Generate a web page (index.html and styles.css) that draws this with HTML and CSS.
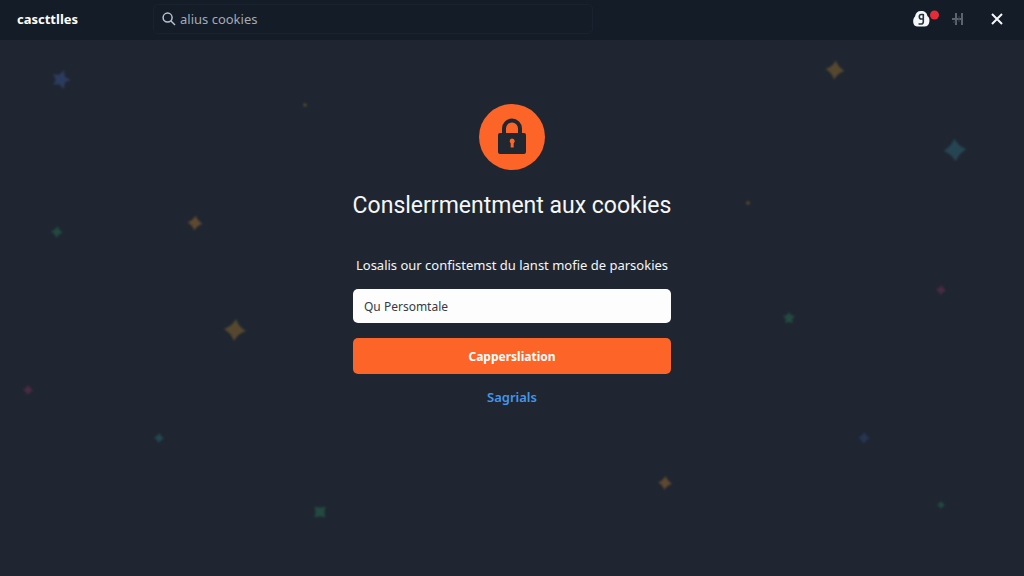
FILE: index.html
```
<!DOCTYPE html>
<html lang="fr">
<head>
    <meta charset="UTF-8">
    <meta name="viewport" content="width=device-width, initial-scale=1.0">
    <title>cascttlles - Cookies</title>
    <link rel="stylesheet" href="styles.css">
</head>
<body>

    <header class="topbar">
        <a class="brand" href="#">cascttlles</a>

        <label class="search">
            <svg class="search-icon" viewBox="0 0 14 14" aria-hidden="true">
                <circle cx="5.6" cy="5.6" r="4.5"/>
                <path d="M9 9l4 4"/>
            </svg>
            <input type="text" aria-label="Recherche" value="alius cookies">
        </label>

        <nav class="actions">
            <button class="account" type="button" aria-label="Compte">
                <svg viewBox="0 0 26 20" aria-hidden="true">
                    <path class="account-shape" d="M8 2c4 0 6 2 6.400 5 1.700 1 2.300 3 2 5.500-.4 3.500-2 5-5 5H5c-3 0-4.600-1.500-4.800-4.500C0 10.500.8 8.500 2 7.500 2.500 4 4.500 2 8 2z"/>
                    <path class="account-mark" d="M10.300 5v7.700c0 1.600-1 2.300-2.300 2.300H5.500M10.300 5.500H8.300C6.800 5.500 6.300 6.300 6.300 7.700s.6 2.300 2 2.300h2"/>
                    <circle class="account-dot" cx="21.500" cy="6" r="4.500"/>
                </svg>
            </button>
            <button class="tools" type="button" aria-label="Options">
                <svg viewBox="0 0 14 14" aria-hidden="true">
                    <path d="M5 1v12M1 7h10M11 1v12"/>
                    <path class="tools-thin" d="M2 10h3M8 4v6"/>
                </svg>
            </button>
            <button class="close" type="button" aria-label="Fermer">
                <svg viewBox="0 0 12 12" aria-hidden="true">
                    <path d="M1 1l10 10M11 1L1 11"/>
                </svg>
            </button>
        </nav>
    </header>

    <main class="page">
        <!-- Étoiles du fond -->
        <svg class="stars" viewBox="0 0 1024 536" preserveAspectRatio="xMidYMid slice" aria-hidden="true">
            <defs>
                <path id="star" d="M1-10Q3-3 10 1Q3 3-1 10Q-3 3-10-1Q-3-3 1-10z"/>
            </defs>
            <path class="blue" d="M64 30l1 7 6 3-6 2-1 7-5-5-6 1 3-5-3-6 6 1z"/>
            <use class="gold" href="#star" transform="translate(835 30) scale(.95)"/>
            <use class="cyan" href="#star" transform="translate(955 110) rotate(-9) scale(1.150)"/>
            <use class="amber" href="#star" transform="translate(195 183) scale(.75)"/>
            <use class="gold" href="#star" transform="translate(235 290) scale(1.100)"/>
            <use class="amber" href="#star" transform="translate(665 443) scale(.7)"/>
            <use class="green" href="#star" transform="translate(57 192) scale(.6)"/>
            <path class="green" d="M789 272l2 3 4 1-3 3 1 4-4-1-4 1 1-4-3-3 4-1z"/>
            <use class="green" href="#star" transform="translate(320 472) rotate(40) scale(.8)"/>
            <use class="teal" href="#star" transform="translate(159 398) scale(.5)"/>
            <use class="blue faint" href="#star" transform="translate(864 398) scale(.6)"/>
            <use class="pink" href="#star" transform="translate(28 350) scale(.5)"/>
            <use class="pink" href="#star" transform="translate(941 250) scale(.5)"/>
            <use class="green" href="#star" transform="translate(941 465) scale(.4)"/>
            <circle class="gold" cx="305" cy="65" r="1.800"/>
            <circle class="amber" cx="748" cy="163" r="1.800"/>
        </svg>

        <!-- Formulaire de consentement -->
        <form class="consent">
            <svg class="lock" viewBox="0 0 66 66" aria-hidden="true">
                <circle class="lock-circle" cx="33" cy="33" r="33"/>
                <path class="lock-arch" d="M25 31v-6.500a8 8 0 0 1 16 0V31"/>
                <rect class="lock-body" x="19" y="29" width="28" height="21" rx="2"/>
                <path class="lock-circle" d="M33 34.500a2.700 2.700 0 0 1 1.700 4.800v4.200h-3v-4.200A2.700 2.700 0 0 1 33 34.500z"/>
            </svg>
            <h1>Conslerrmentment aux cookies</h1>
            <label class="intro" for="personal">Losalis our confistemst du lanst mofie de parsokies</label>
            <input class="field" type="text" id="personal" value="Qu Persomtale">
            <button class="submit" type="button">Cappersliation</button>
            <a class="more" href="#">Sagrials</a>
        </form>
    </main>

</body>
</html>
```
FILE: styles.css
```
* {
    box-sizing: border-box;
}

body {
    display: flex;
    flex-direction: column;
    min-height: 100vh;
    margin: 0;
    font-family: "Noto Sans", sans-serif;
    color: #f4f6f8;
    background-color: #1f2631;
}

input, button {
    font-family: inherit;
    border: none;
}

button {
    cursor: pointer;
}

a {
    text-decoration: none;
}

.topbar {
    display: flex;
    align-items: center;
    height: 40px;
    padding: 0 21px 2px 17px;
    background-color: #141c27;
}

.brand {
    width: 136px;
    font-size: 13px;
    font-weight: 700;
    color: #fff;
}

.search {
    display: flex;
    align-items: center;
    gap: 4px;
    width: 43vw;
    height: 30px;
    padding: 0 8px;
    border: 1px solid #19222e;
    border-radius: 5px;
}

.search-icon {
    width: 14px;
    height: 14px;
    fill: none;
    stroke: #b9c1d2;
    stroke-width: 1.5;
}

.search input {
    flex: 1;
    padding: 0;
    font-size: 13px;
    color: #a3abb9;
    background: none;
}

.actions {
    display: flex;
    align-items: center;
    gap: 12px;
    margin-left: auto;
}

.actions button {
    display: flex;
    padding: 0;
    background: none;
}

.account svg {
    width: 26px;
    height: 20px;
}

.account-shape {
    fill: #f5f7f9;
}

.account-mark {
    fill: none;
    stroke: #26303c;
    stroke-width: 1.6;
}

.account-dot {
    fill: #e52b38;
}

.tools svg {
    width: 14px;
    height: 14px;
    fill: none;
    stroke: #5b6370;
    stroke-width: 2;
}

.tools .tools-thin {
    stroke: #3a424f;
    stroke-width: 1;
}

.actions .close {
    padding-left: 14px;
}

.close svg {
    width: 12px;
    height: 12px;
    fill: none;
    stroke: #f5f7f9;
    stroke-width: 2;
}

.page {
    position: relative;
    flex: 1;
    padding: 64px 20px;
}

.stars {
    position: absolute;
    top: 0;
    left: 0;
    width: 100%;
    height: 100%;
    opacity: 0.75;
    filter: blur(1px);
}

.blue {
    fill: #30436d;
}

.gold {
    fill: #69542f;
}

.amber {
    fill: #765430;
}

.cyan {
    fill: #29505f;
}

.green {
    fill: #245645;
}

.teal {
    fill: #24535a;
}

.pink {
    fill: #5a2d49;
}

.faint {
    opacity: 0.7;
}

.consent {
    position: relative;
    display: flex;
    flex-direction: column;
    align-items: center;
    max-width: 318px;
    margin: 0 auto;
}

.lock {
    width: 66px;
    height: 66px;
}

.lock-circle {
    fill: #fc6527;
}

.lock-arch {
    fill: none;
    stroke: #202731;
    stroke-width: 4;
}

.lock-body {
    fill: #202731;
}

.consent h1 {
    margin: 20px 0 33px;
    font-family: Roboto, "Noto Sans", sans-serif;
    font-size: 23px;
    font-weight: 400;
    line-height: 32px;
    white-space: nowrap;
}

.intro {
    margin-bottom: 14px;
    font-size: 13px;
    line-height: 20px;
    white-space: nowrap;
}

.field {
    width: 100%;
    height: 34px;
    padding: 0 11px;
    font-size: 12px;
    color: #353b45;
    background-color: #fdfdfd;
    border-radius: 5px;
}

.submit {
    width: 100%;
    height: 36px;
    margin: 15px 0 13px;
    font-size: 12px;
    font-weight: 700;
    color: #fff;
    background-color: #fc6527;
    border-radius: 5px;
}

.more {
    font-size: 13px;
    font-weight: 600;
    line-height: 20px;
    color: #4596ea;
}
```
